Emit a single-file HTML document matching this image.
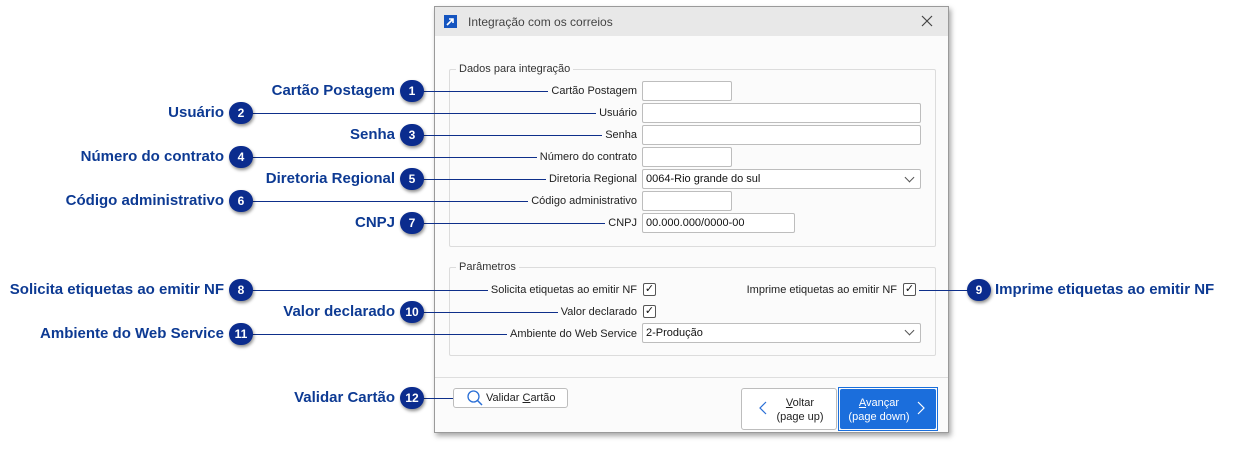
<!DOCTYPE html>
<html><head><meta charset="utf-8">
<style>
*{box-sizing:border-box;margin:0;padding:0}
body{width:1234px;height:449px;background:#fff;position:relative;overflow:hidden;font-family:"Liberation Sans",sans-serif}
.abs{position:absolute}
.dlg{left:434px;top:6px;width:515px;height:427px;background:#fbfbfb;border:1px solid #9a9a9a;box-shadow:2px 3px 5px rgba(0,0,0,.35)}
.tb{left:0;top:0;width:513px;height:29px;background:#e8e8e8}
.fl{font-size:11px;color:#222;white-space:nowrap}
.lbl{text-align:right;background:#fbfbfb;padding-left:3px}
.inp{background:#fff;border:1px solid #bdbdbd;border-radius:2px;height:20px;font-size:11px;color:#111;padding:3px 0 0 3px}
.grp{border:1px solid #dcdcdc;border-radius:2px}
.gt{background:#fbfbfb;padding:0 3px;font-size:11px;color:#333}
.ln{height:1px;background:#0e2f8a}
.bd{width:24px;height:22px;border-radius:11px;background:#0b2c8e;color:#fff;font-size:12px;font-weight:bold;text-align:center;line-height:22px;box-shadow:1px 2px 3px rgba(0,0,0,.45)}
.al{font-size:15px;font-weight:bold;color:#0d3a93;white-space:nowrap;text-align:right}
.cb{width:13px;height:13px;border:1px solid #555;border-radius:2px;background:#fff;font-size:11px;line-height:11px;text-align:center;color:#111}
.chev{width:7px;height:7px;border-right:1px solid #555;border-bottom:1px solid #555;transform:rotate(45deg)}
</style></head><body>

<div class="abs dlg">
  <div class="abs tb"></div>
  <div class="abs" style="left:9px;top:8px;width:13px;height:13px;background:#1555c0"></div>
  <svg class="abs" style="left:9px;top:8px" width="13" height="13"><path d="M3 10 L9 4 M5 4 H9 V8" stroke="#fff" stroke-width="1.6" fill="none"/></svg>
  <div class="abs fl" style="left:33px;top:8px;font-size:12px;color:#444">Integração com os correios</div>
  <svg class="abs" style="left:486px;top:8px" width="12" height="12"><path d="M1 1 L11 11 M11 1 L1 11" stroke="#444" stroke-width="1.2"/></svg>

  <div class="abs grp" style="left:14px;top:62px;width:487px;height:178px"></div>
  <div class="abs gt" style="left:21px;top:56px">Dados para integração</div>
  <div class="abs grp" style="left:14px;top:260px;width:487px;height:89px"></div>
  <div class="abs gt" style="left:21px;top:254px">Parâmetros</div>

  <div class="abs" style="left:0;top:370px;width:513px;height:1px;background:#dedede"></div>
</div>

<!-- lines -->
<div class="abs ln" style="left:411px;top:91px;width:226px"></div>
<div class="abs ln" style="left:240px;top:113px;width:397px"></div>
<div class="abs ln" style="left:411px;top:135px;width:226px"></div>
<div class="abs ln" style="left:240px;top:157px;width:397px"></div>
<div class="abs ln" style="left:411px;top:179px;width:226px"></div>
<div class="abs ln" style="left:240px;top:201px;width:397px"></div>
<div class="abs ln" style="left:411px;top:223px;width:226px"></div>
<div class="abs ln" style="left:240px;top:290px;width:397px"></div>
<div class="abs ln" style="left:411px;top:312px;width:226px"></div>
<div class="abs ln" style="left:240px;top:334px;width:397px"></div>
<div class="abs ln" style="left:411px;top:398px;width:50px"></div>
<div class="abs ln" style="left:919px;top:290px;width:60px"></div>

<!-- form labels -->
<div class="abs fl lbl" style="right:597px;top:85px">Cartão Postagem</div>
<div class="abs fl lbl" style="right:597px;top:107px">Usuário</div>
<div class="abs fl lbl" style="right:597px;top:129px">Senha</div>
<div class="abs fl lbl" style="right:597px;top:151px">Número do contrato</div>
<div class="abs fl lbl" style="right:597px;top:173px">Diretoria Regional</div>
<div class="abs fl lbl" style="right:597px;top:195px">Código administrativo</div>
<div class="abs fl lbl" style="right:597px;top:217px">CNPJ</div>
<div class="abs fl lbl" style="right:597px;top:284px">Solicita etiquetas ao emitir NF</div>
<div class="abs fl lbl" style="right:597px;top:306px">Valor declarado</div>
<div class="abs fl lbl" style="right:597px;top:328px">Ambiente do Web Service</div>
<div class="abs fl" style="right:337px;top:284px">Imprime etiquetas ao emitir NF</div>

<div class="abs inp" style="left:642px;top:81px;width:90px"></div>
<div class="abs inp" style="left:642px;top:103px;width:279px"></div>
<div class="abs inp" style="left:642px;top:125px;width:279px"></div>
<div class="abs inp" style="left:642px;top:147px;width:90px"></div>
<div class="abs inp" style="left:642px;top:169px;width:279px">0064-Rio grande do sul</div>
<div class="abs chev" style="left:906px;top:174px"></div>
<div class="abs inp" style="left:642px;top:191px;width:90px"></div>
<div class="abs inp" style="left:642px;top:213px;width:153px">00.000.000/0000-00</div>
<div class="abs cb" style="left:643px;top:283px">✓</div>
<div class="abs cb" style="left:903px;top:283px">✓</div>
<div class="abs cb" style="left:643px;top:305px">✓</div>
<div class="abs inp" style="left:642px;top:323px;width:279px">2-Produção</div>
<div class="abs chev" style="left:906px;top:327px"></div>

<!-- footer buttons -->
<div class="abs" style="left:453px;top:388px;width:115px;height:20px;border:1px solid #bdbdbd;border-radius:3px;background:#fff"></div>
<svg class="abs" style="left:466px;top:389px" width="18" height="18"><circle cx="7.5" cy="7.5" r="5.5" stroke="#2a6fd6" stroke-width="1.3" fill="none"/><path d="M11.5 11.5 L16 16" stroke="#2a6fd6" stroke-width="1.5"/></svg>
<div class="abs fl" style="left:486px;top:392px">Validar <u>C</u>artão</div>

<div class="abs" style="left:741px;top:388px;width:96px;height:42px;border:1px solid #bdbdbd;border-radius:3px;background:#fff"></div>
<svg class="abs" style="left:759px;top:401px" width="8" height="14"><path d="M7 1 L1 7 L7 13" stroke="#2a6fd6" stroke-width="1.2" fill="none"/></svg>
<div class="abs fl" style="left:772px;top:396px;width:56px;text-align:center;line-height:14px"><u>V</u>oltar<br>(page up)</div>

<div class="abs" style="left:838px;top:387px;width:100px;height:44px;border:1px solid #1a6fdc"></div>
<div class="abs" style="left:840px;top:389px;width:96px;height:40px;background:#1b6edc;border-radius:2px"></div>
<div class="abs fl" style="left:842px;top:396px;width:74px;text-align:center;line-height:14px;color:#fff"><u>A</u>vançar<br>(page down)</div>
<svg class="abs" style="left:917px;top:401px" width="8" height="14"><path d="M1 1 L7 7 L1 13" stroke="#fff" stroke-width="1.2" fill="none"/></svg>

<!-- badges & annotation labels -->
<div class="abs bd" style="left:400px;top:80px">1</div>
<div class="abs al" style="right:839px;top:82px">Cartão Postagem</div>
<div class="abs bd" style="left:229px;top:102px">2</div>
<div class="abs al" style="right:1010px;top:104px">Usuário</div>
<div class="abs bd" style="left:400px;top:124px">3</div>
<div class="abs al" style="right:839px;top:126px">Senha</div>
<div class="abs bd" style="left:229px;top:146px">4</div>
<div class="abs al" style="right:1010px;top:148px">Número do contrato</div>
<div class="abs bd" style="left:400px;top:168px">5</div>
<div class="abs al" style="right:839px;top:170px">Diretoria Regional</div>
<div class="abs bd" style="left:229px;top:190px">6</div>
<div class="abs al" style="right:1010px;top:192px">Código administrativo</div>
<div class="abs bd" style="left:400px;top:212px">7</div>
<div class="abs al" style="right:839px;top:214px">CNPJ</div>
<div class="abs bd" style="left:229px;top:279px">8</div>
<div class="abs al" style="right:1010px;top:281px">Solicita etiquetas ao emitir NF</div>
<div class="abs bd" style="left:400px;top:301px">10</div>
<div class="abs al" style="right:839px;top:303px">Valor declarado</div>
<div class="abs bd" style="left:229px;top:323px">11</div>
<div class="abs al" style="right:1010px;top:325px">Ambiente do Web Service</div>
<div class="abs bd" style="left:400px;top:387px">12</div>
<div class="abs al" style="right:839px;top:389px">Validar Cartão</div>
<div class="abs bd" style="left:967px;top:279px">9</div>
<div class="abs al" style="left:995px;top:281px;text-align:left">Imprime etiquetas ao emitir NF</div>

</body></html>
